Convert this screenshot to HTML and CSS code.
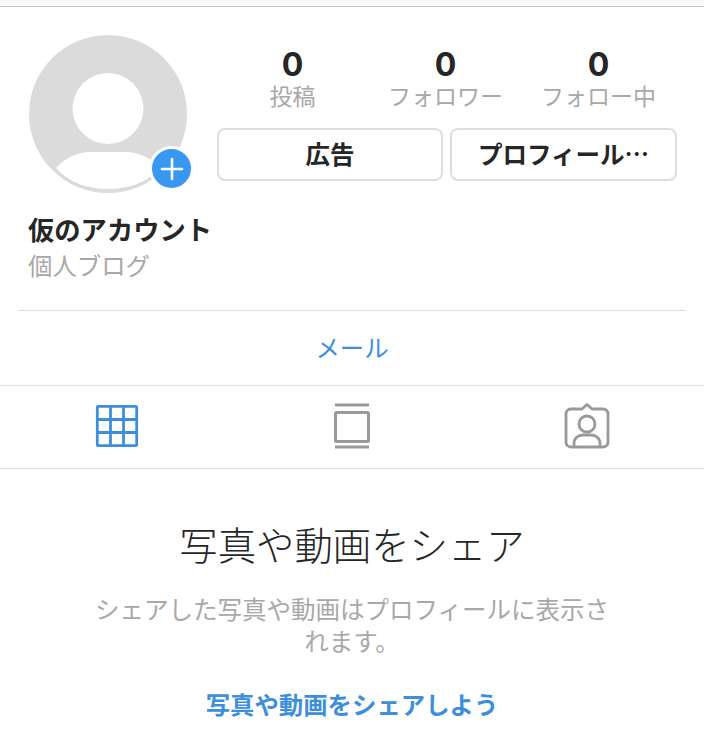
FILE: index.html
```html
<!DOCTYPE html>
<html lang="ja">
<head>
    <meta charset="UTF-8">
    <meta name="viewport" content="width=device-width, initial-scale=1.0">
    <title>プロフィール</title>
    <link rel="stylesheet" href="styles.css">
</head>
<body>

<div class="top-bar"></div>

<!-- プロフィール -->
<div class="profile">
    <div class="profile-head">
        <div class="avatar">
            <svg width="158" height="158" viewBox="0 0 158 158">
                <circle cx="79" cy="79" r="79" fill="#dbdbdb"/>
                <circle cx="79" cy="73.5" r="35.5" fill="#fff"/>
                <path d="M27 133 C36 123 48 117 62 117 H96 C110 117 122 123 131 133 C118 148 99 154 79 154 C59 154 40 148 27 133 Z" fill="#fff"/>
            </svg>
            <div class="avatar-badge">
                <svg width="24" height="24" viewBox="0 0 24 24">
                    <path d="M12 2 V22 M2 12 H22" stroke="#fff" stroke-width="2.6" stroke-linecap="round"/>
                </svg>
            </div>
        </div>
        <div class="profile-side">
            <div class="stats">
                <div class="stat"><div class="stat-num">0</div><div class="stat-label">投稿</div></div>
                <div class="stat"><div class="stat-num">0</div><div class="stat-label">フォロワー</div></div>
                <div class="stat"><div class="stat-num">0</div><div class="stat-label">フォロー中</div></div>
            </div>
            <div class="profile-buttons">
                <button>広告</button>
                <button>プロフィール…</button>
            </div>
        </div>
    </div>
    <div class="name">仮のアカウント</div>
    <div class="category">個人ブログ</div>
</div>

<div class="contact"><a>メール</a></div>

<!-- タブ -->
<div class="tabs">
    <div class="tab">
        <svg width="44" height="44" viewBox="0 0 44 44" fill="none" stroke="#3d8fdc" stroke-width="2.8">
            <rect x="2.3" y="2.3" width="39.4" height="39.4" rx="1"/>
            <path d="M15.5 2 V42 M28.5 2 V42 M2 15.5 H42 M2 28.5 H42"/>
        </svg>
    </div>
    <div class="tab">
        <svg width="38" height="46" viewBox="0 0 38 46" fill="none" stroke="#999" stroke-width="3">
            <path d="M2 2 H36 M2 44 H36"/>
            <rect x="2.5" y="9.5" width="33" height="29" rx="1"/>
        </svg>
    </div>
    <div class="tab">
        <svg width="46" height="46" viewBox="0 0 46 46" fill="none" stroke="#999" stroke-width="2.8">
            <path d="M7 6 H18 L23 1.5 L28 6 H39 C42 6 44 8 44 11 V39 C44 42 42 44 39 44 H7 C4 44 2 42 2 39 V11 C2 8 4 6 7 6 Z" stroke-linejoin="round"/>
            <circle cx="23" cy="21" r="8"/>
            <path d="M10 43 V41 C10 35 14 32 19 32 H27 C32 32 36 35 36 41 V43"/>
        </svg>
    </div>
</div>

<!-- 投稿がない時の案内 -->
<div class="empty">
    <h2>写真や動画をシェア</h2>
    <p>シェアした写真や動画はプロフィールに表示されます。</p>
    <a>写真や動画をシェアしよう</a>
</div>

</body>
</html>
```

FILE: styles.css
```css
html, body {
    height: 100%;
}

body {
    margin: 0;
    overflow: hidden;
    background-color: #fff;
    color: #262626;
    font-family: "Noto Sans CJK JP", "Noto Sans", sans-serif;
}

.top-bar {
    height: 6px;
    background-color: #f8f8f8;
    border-bottom: 1px solid #c8c8c8;
}

/* プロフィール */
.profile {
    height: 304px;
    margin: 0 18px;
    padding: 28px 10px 0 11px;
    box-sizing: border-box;
    border-bottom: 1px solid #dbdbdb;
}

.profile-head {
    display: flex;
}

.avatar {
    position: relative;
    width: 158px;
    height: 158px;
    flex-shrink: 0;
}

.avatar svg {
    display: block;
}

.avatar-badge {
    position: absolute;
    left: 120px;
    top: 111px;
    width: 39px;
    height: 39px;
    border: 3px solid #fff;
    border-radius: 50%;
    background-color: #3897f0;
    display: flex;
    align-items: center;
    justify-content: center;
}

.profile-side {
    margin-left: 30px;
    flex: 1;
}

.stats {
    display: grid;
    grid-template-columns: repeat(3, 153px);
    height: 93px;
    margin-left: -1px;
    justify-content: start;
}

.stat {
    text-align: center;
    padding-top: 12px;
}

.stat-num {
    font-family: Inter, "Noto Sans", sans-serif;
    font-size: 32px;
    font-weight: 700;
    line-height: 36px;
}

.stat-label {
    font-size: 23px;
    line-height: 24px;
    color: #a8a8a8;
}

.profile-buttons {
    display: grid;
    grid-template-columns: 226px 227px;
    gap: 7px;
}

.profile-buttons button {
    height: 53px;
    padding: 0 0 2px;
    background-color: #fff;
    border: 2px solid #dedede;
    border-radius: 8px;
    color: #262626;
    font-family: inherit;
    font-size: 24.5px;
    font-weight: 700;
}

.name {
    margin-top: 17px;
    margin-left: -1px;
    font-size: 26.3px;
    font-weight: 700;
    line-height: 38px;
}

.category {
    margin-left: -1px;
    font-size: 24.4px;
    line-height: 34px;
    color: #a8a8a8;
}

.contact {
    height: 75px;
    padding-bottom: 3px;
    box-sizing: border-box;
    display: flex;
    align-items: center;
    justify-content: center;
    border-bottom: 1px solid #dbdbdb;
    color: #3d8fdc;
    font-size: 24.4px;
}

/* タブ */
.tabs {
    height: 83px;
    box-sizing: border-box;
    display: grid;
    grid-template-columns: 234px 236px 234px;
    border-bottom: 1px solid #dbdbdb;
}

.tab {
    display: flex;
    align-items: center;
    justify-content: center;
    padding-bottom: 2px;
}

.empty {
    text-align: center;
}

.empty h2 {
    margin: 46px 0 0;
    font-size: 38.4px;
    font-weight: 300;
    line-height: 56px;
}

.empty p {
    width: 530px;
    margin: 22px auto 0;
    font-size: 24.5px;
    line-height: 32px;
    color: #a8a8a8;
}

.empty a {
    display: block;
    margin-top: 30px;
    color: #3d8fdc;
    font-size: 24.4px;
    font-weight: 700;
    line-height: 34px;
}
```
